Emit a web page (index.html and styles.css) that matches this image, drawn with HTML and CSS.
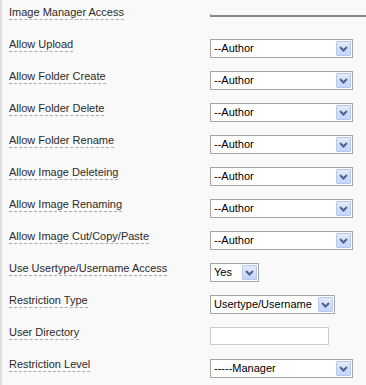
FILE: index.html
```html
<!DOCTYPE html>
<html>
<head>
<meta charset="utf-8">
<link rel="stylesheet" href="styles.css">
</head>
<body>
<div class="form">
  <div class="row">
    <span class="label">Image Manager Access</span>
    <div class="listbox"></div>
  </div>
  <div class="row">
    <span class="label">Allow Upload</span>
    <div class="select w-wide"><span class="val">--Author</span><span class="btn"><svg width="9" height="6" viewBox="0 0 9 6"><path d="M1 1 L4.5 4.5 L8 1" fill="none" stroke="#4d6185" stroke-width="2"/></svg></span></div>
  </div>
  <div class="row">
    <span class="label">Allow Folder Create</span>
    <div class="select w-wide"><span class="val">--Author</span><span class="btn"><svg width="9" height="6" viewBox="0 0 9 6"><path d="M1 1 L4.5 4.5 L8 1" fill="none" stroke="#4d6185" stroke-width="2"/></svg></span></div>
  </div>
  <div class="row">
    <span class="label">Allow Folder Delete</span>
    <div class="select w-wide"><span class="val">--Author</span><span class="btn"><svg width="9" height="6" viewBox="0 0 9 6"><path d="M1 1 L4.5 4.5 L8 1" fill="none" stroke="#4d6185" stroke-width="2"/></svg></span></div>
  </div>
  <div class="row">
    <span class="label">Allow Folder Rename</span>
    <div class="select w-wide"><span class="val">--Author</span><span class="btn"><svg width="9" height="6" viewBox="0 0 9 6"><path d="M1 1 L4.5 4.5 L8 1" fill="none" stroke="#4d6185" stroke-width="2"/></svg></span></div>
  </div>
  <div class="row">
    <span class="label">Allow Image Deleteing</span>
    <div class="select w-wide"><span class="val">--Author</span><span class="btn"><svg width="9" height="6" viewBox="0 0 9 6"><path d="M1 1 L4.5 4.5 L8 1" fill="none" stroke="#4d6185" stroke-width="2"/></svg></span></div>
  </div>
  <div class="row">
    <span class="label">Allow Image Renaming</span>
    <div class="select w-wide"><span class="val">--Author</span><span class="btn"><svg width="9" height="6" viewBox="0 0 9 6"><path d="M1 1 L4.5 4.5 L8 1" fill="none" stroke="#4d6185" stroke-width="2"/></svg></span></div>
  </div>
  <div class="row">
    <span class="label">Allow Image Cut/Copy/Paste</span>
    <div class="select w-wide"><span class="val">--Author</span><span class="btn"><svg width="9" height="6" viewBox="0 0 9 6"><path d="M1 1 L4.5 4.5 L8 1" fill="none" stroke="#4d6185" stroke-width="2"/></svg></span></div>
  </div>
  <div class="row">
    <span class="label">Use Usertype/Username Access</span>
    <div class="select w-yes"><span class="val">Yes</span><span class="btn"><svg width="9" height="6" viewBox="0 0 9 6"><path d="M1 1 L4.5 4.5 L8 1" fill="none" stroke="#4d6185" stroke-width="2"/></svg></span></div>
  </div>
  <div class="row">
    <span class="label">Restriction Type</span>
    <div class="select w-type"><span class="val">Usertype/Username</span><span class="btn"><svg width="9" height="6" viewBox="0 0 9 6"><path d="M1 1 L4.5 4.5 L8 1" fill="none" stroke="#4d6185" stroke-width="2"/></svg></span></div>
  </div>
  <div class="row">
    <span class="label">User Directory</span>
    <div class="textbox"></div>
  </div>
  <div class="row">
    <span class="label">Restriction Level</span>
    <div class="select w-wide"><span class="val">-----Manager</span><span class="btn"><svg width="9" height="6" viewBox="0 0 9 6"><path d="M1 1 L4.5 4.5 L8 1" fill="none" stroke="#4d6185" stroke-width="2"/></svg></span></div>
  </div>
</div>
</body>
</html>
```
FILE: styles.css
```css
html, body {
  margin: 0;
  padding: 0;
  background: #f9f9f9;
}
body {
  width: 366px;
  height: 385px;
  overflow: hidden;
  font-family: "Liberation Sans", Arial, sans-serif;
  font-size: 11px;
  color: #2b2b2b;
  border-left: 2px solid #dedede;
  box-sizing: border-box;
}
.form {
  display: flex;
  flex-direction: column;
  padding-left: 7px;
}
.row {
  height: 32px;
  display: grid;
  grid-template-columns: 201px 1fr;
  align-items: start;
}
.label {
  display: block;
  justify-self: start;
  margin-top: 6px;
  line-height: 13px;
  border-bottom: 1px dashed #aaa;
}
.listbox {
  margin-top: 14px;
  height: 1px;
  border-left: 1px solid #888;
  border-bottom: 2px solid #888;
}
.select {
  margin-top: 7px;
  height: 19px;
  box-sizing: border-box;
  border: 1px solid #a5a5a5;
  background: #fff;
  display: flex;
  align-items: center;
  justify-content: space-between;
  padding: 1px 1px 1px 3px;
  color: #000;
}
.val {
  line-height: 15px;
  white-space: nowrap;
}
.btn {
  width: 15px;
  height: 15px;
  box-sizing: border-box;
  border: 1px solid #b6c8ee;
  border-radius: 1px;
  background: linear-gradient(#e3ebfd, #c3d5f9);
  display: flex;
  align-items: center;
  justify-content: center;
  flex: none;
  margin-left: 4px;
}
.w-wide { width: 143px; }
.w-yes { width: 49px; }
.w-type { width: 125px; }
.textbox {
  margin-top: 7px;
  width: 119px;
  height: 18px;
  box-sizing: border-box;
  border: 1px solid #ccc;
  background: #fff;
}
```
